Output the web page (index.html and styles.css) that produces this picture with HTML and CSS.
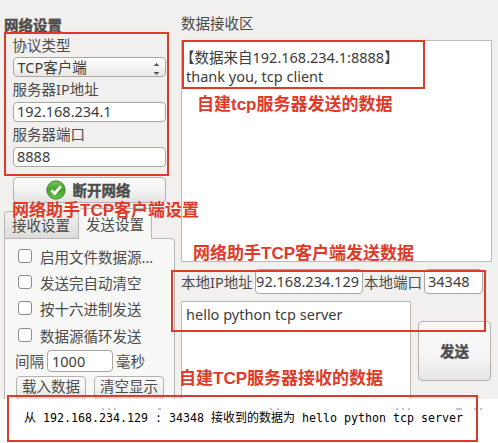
FILE: index.html
```html
<!DOCTYPE html>
<html lang="zh-CN">
<head>
<meta charset="utf-8">
<title>网络助手</title>
<link rel="stylesheet" href="styles.css">
</head>
<body>
<main class="window">
  <aside class="sidebar">
    <h2 class="heading">网络设置</h2>
    <section class="network">
      <div class="label first">协议类型</div>
      <div class="field select"><span>TCP客户端</span>
        <svg class="arrows" width="7" height="14" viewBox="0 0 7 14"><path d="M.6 4 3.5 1 6.4 4zM.6 10h5.8L3.5 13z" fill="#555"/></svg>
      </div>
      <div class="label">服务器IP地址</div>
      <div class="field">192.168.234.1</div>
      <div class="label">服务器端口</div>
      <div class="field">8888</div>
      <div class="button connect">
        <svg width="20" height="20" viewBox="0 0 20 20">
          <defs><linearGradient id="g" x1="0" y1="0" x2="0" y2="1"><stop offset="0" stop-color="#79c653"/><stop offset=".5" stop-color="#3ea52b"/><stop offset="1" stop-color="#69c749"/></linearGradient></defs>
          <circle cx="10" cy="10" r="9.1" fill="url(#g)" stroke="#3a7c2b"/>
          <path d="M5.3 10.2 8.7 13.4 14.8 6.4" fill="none" stroke="#fff" stroke-width="2.8"/>
        </svg>
        <span>断开网络</span>
      </div>
    </section>
    <nav class="tabs"><div class="tab">接收设置</div><div class="tab active">发送设置</div></nav>
    <section class="panel">
      <div class="check"><i class="box"></i>启用文件数据源...</div>
      <div class="check"><i class="box"></i>发送完自动清空</div>
      <div class="check"><i class="box"></i>按十六进制发送</div>
      <div class="check"><i class="box"></i>数据源循环发送</div>
      <div class="interval"><span>间隔</span><div class="field">1000</div><span>毫秒</span></div>
      <div class="actions"><div class="button">载入数据</div><div class="button">清空显示</div></div>
    </section>
  </aside>
  <section class="content">
    <div class="label receive-label">数据接收区</div>
    <div class="receive"><div class="source">【数据来自192.168.234.1:8888】</div><div class="message">thank you, tcp client</div></div>
    <div class="local">
      <span class="ip-label">本地IP地址</span><div class="field ip"><span>192.168.234.129</span></div>
      <span class="port-label">本地端口</span><div class="field port">34348</div>
    </div>
    <div class="compose"><div class="draft">hello python tcp server</div><div class="button send">发送</div></div>
  </section>
</main>
<footer class="console"><span class="cjk">从</span> 192.168.234.129 : 34348 <span class="cjk">接收到的数据为</span> hello python tcp server</footer>

<div class="frame frame-network"></div>
<div class="frame frame-receive"></div>
<div class="frame frame-send"></div>
<div class="frame frame-console"></div>
<div class="note note-receive">自建tcp服务器发送的数据</div>
<div class="note note-network">网络助手TCP客户端设置</div>
<div class="note note-send">网络助手TCP客户端发送数据</div>
<div class="note note-console">自建TCP服务器接收的数据</div>
<svg class="specks" width="400" height="2" viewBox="0 0 400 2"><path d="M2 1h2M8 1h2M14 1h2M58 1h3M170 1h2M177 1h2M296 1h2M302 1h2M308 1h2M356 1h6M374 1h2M380 1h2" stroke="#8b80c0" stroke-width="1"/></svg>
</body>
</html>
```
FILE: styles.css
```css
* { box-sizing: border-box; }
body {
  position: relative;
  width: 498px;
  height: 443px;
  margin: 0;
  overflow: hidden;
  background: #fff;
  color: #4c4c4c;
  font: 14.5px/20px "Noto Sans", "Noto Sans CJK SC", sans-serif;
  white-space: nowrap;
}
.window {
  display: flex;
  height: 399px;
  overflow: hidden;
  background: #f1f0ee;
}
.sidebar { width: 176px; padding: 15px 0 0 4px; flex: none; }
.heading { margin: 0; height: 20px; font-size: 14.5px; line-height: 20px; font-weight: 700; -webkit-text-stroke: .4px #4c4c4c; }
.network { width: 162px; padding-left: 9px; }
.network .label, .network .select span { text-indent: -.5px; }
.label { height: 25px; line-height: 25px; }
.label.first { height: 22px; line-height: 20px; }
.field {
  height: 20px;
  padding: 0 3px;
  border: 1px solid #aaa7a2;
  border-radius: 4px;
  background: #fff;
  color: #3c3c3c;
  line-height: 17px;
}
.select {
  display: flex;
  justify-content: space-between;
  align-items: center;
  padding: 0 5px 0 4px;
  background: linear-gradient(#fff, #e9e8e6);
}
.arrows { flex: none; margin-top: 3px; }
.button {
  display: flex;
  align-items: center;
  justify-content: center;
  border: 1px solid #b5b2ae;
  border-radius: 4px;
  background: linear-gradient(#fafafa, #f5f5f4 45%, #e2e1df);
}
.connect { height: 26px; margin-top: 10px; padding-right: 3px; gap: 7px; font-weight: 700; -webkit-text-stroke: .4px #4c4c4c; }
.tabs { display: flex; align-items: flex-end; height: 35px; }
.tab {
  width: 75px;
  height: 27px;
  padding-left: 7px;
  border: 1px solid #b9b6b2;
  border-bottom: 0;
  border-radius: 4px 4px 0 0;
  background: linear-gradient(#f1f0ee, #dddcda);
  line-height: 27px;
}
.tab.active {
  position: relative;
  z-index: 1;
  width: 73px;
  height: 31px;
  margin-bottom: -1px;
  border-left: 0;
  background: #f7f7f6;
  line-height: 30px;
}
.panel {
  width: 171px;
  height: 170px;
  padding: 5px 0 0 11px;
  border: 1px solid #b9b6b2;
  border-radius: 0 4px 0 0;
  background: #f7f7f6;
}
.check { display: flex; align-items: center; height: 26.4px; padding: 0 0 1px 2px; }
.box { width: 14px; height: 14px; margin: -2px 8px 0 0; border: 1px solid #8f8c88; border-radius: 3px; background: #fff; }
.interval { display: flex; align-items: center; gap: 3px; height: 27px; margin: -2px 0 0 -1px; padding-bottom: 1px; }
.interval .field { width: 66px; height: 22px; padding-left: 4px; line-height: 20px; }
.actions { display: flex; gap: 8px; margin-top: 1px; }
.actions .button { width: 70px; height: 24px; padding-bottom: 3px; }
.content { width: 312px; padding-left: 5px; padding-top: 11px; }
.receive-label { height: 29px; }
.receive {
  width: 311px;
  height: 222px;
  padding-top: 7px;
  border: 1px solid #bebbb7;
  background: #fff;
  color: #3c3c3c;
  line-height: 19px;
}
.source { margin-left: -2px; }
.message { padding-left: 4px; }
.local { display: flex; width: 302px; height: 39px; padding-top: 7px; line-height: 26px; }
.ip-label { width: 74px; flex: none; }
.port-label { width: 61px; padding-left: 1px; flex: none; }
.local .field { height: 25px; line-height: 23px; flex: none; }
.ip { display: flex; justify-content: flex-end; width: 108px; overflow: hidden; }
.port { width: 59px; }
.compose { display: flex; align-items: flex-start; gap: 7px; }
.draft { width: 230px; height: 101px; padding: 2px 4px; border: 1px solid #bebbb7; background: #fff; color: #3c3c3c; flex: none; }
.send { width: 73px; height: 60px; margin-top: 20px; font-weight: 700; background: linear-gradient(#f8f8f8, #f5f5f5 60%, #e6e5e4); flex: none; -webkit-text-stroke: .4px #4c4c4c; }
.console {
  padding: 9px 0 0 24px;
  color: #000;
  font: 11.63px/20px "DejaVu Sans Mono", "Noto Sans CJK SC", monospace;
}
.cjk { font-size: 12px; }
.frame { position: absolute; z-index: 2; border: 2px solid #df3a29; }
.frame-network { left: 4px; top: 32px; width: 165px; height: 144px; }
.frame-receive { left: 182px; top: 40px; width: 243px; height: 49px; }
.frame-send { left: 171px; top: 270px; width: 315px; height: 62px; }
.frame-console { left: 7px; top: 395px; width: 471px; height: 47px; }
.note {
  position: absolute;
  z-index: 3;
  color: #df3a29;
  font: 700 17px/22px "Liberation Sans", "Noto Sans CJK SC", sans-serif;
}
.note-receive { left: 197px; top: 94px; }
.note-network { left: 12px; top: 200px; }
.note-send { left: 193px; top: 243px; }
.note-console { left: 179px; top: 368px; }
.specks { position: absolute; left: 100px; top: 408px; }
```
